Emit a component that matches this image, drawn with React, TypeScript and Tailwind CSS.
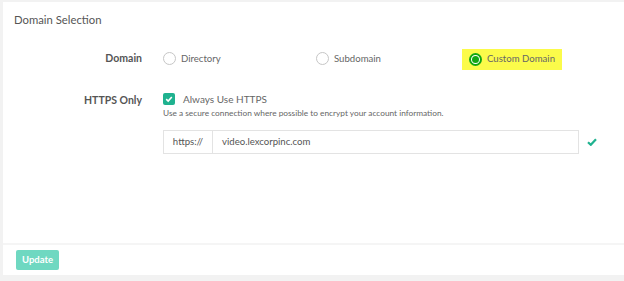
const Radio = ({ checked }: { checked?: boolean }) =>
  checked ? (
    <span className="shrink-0 w-[13px] h-[13px] rounded-full border-2 border-[#13a713] bg-white flex items-center justify-center">
      <span className="w-[7px] h-[7px] rounded-full bg-[#13a713]" />
    </span>
  ) : (
    <span className="shrink-0 w-[13px] h-[13px] rounded-full border border-[#c6c6c6] bg-white" />
  );

const App = () => {
  return (
    <div className="w-[624px] h-[281px] bg-[#f2f2f2] pt-[2px] pl-[3px] pb-[6px] font-['Lato','Open_Sans',sans-serif] text-[#555]">
      <div className="bg-white h-full flex flex-col">
        <div className="h-[37px] pl-[11px] pt-[10px] text-[11.3px] text-[#555]">Domain Selection</div>

        <div className="flex-1 pt-[9px]">
          <div className="flex items-center h-[22px]">
            <div className="w-[139px] text-right text-[10.5px] font-bold text-[#555]">Domain</div>
            <div className="ml-[21px] flex items-center whitespace-nowrap text-[#666] text-[9.6px]">
              <div className="w-[153px] flex items-center gap-[5px]">
                <Radio />
                <span>Directory</span>
              </div>
              <div className="w-[146px] flex items-center gap-[5px]">
                <Radio />
                <span>Subdomain</span>
              </div>
              <div className="w-[100px] h-[21px] bg-[#fbfb4a] pl-[7px] flex items-center gap-[5px]">
                <Radio checked />
                <span>Custom Domain</span>
              </div>
            </div>
          </div>

          <div className="flex mt-[22px]">
            <div className="w-[139px] text-right text-[10.5px] font-bold text-[#555] pt-[1px]">HTTPS Only</div>
            <div className="ml-[21px] w-[440px]">
              <div className="flex items-center gap-[8px] h-[14px]">
                <span className="w-[12px] h-[12px] rounded-[2px] bg-[#1fb28f] flex items-center justify-center">
                  <svg width="8" height="8" viewBox="0 0 10 10">
                    <path d="M1.5 5.2 L4 7.5 L8.5 2.5" stroke="white" strokeWidth="2" fill="none" />
                  </svg>
                </span>
                <span className="text-[10px] text-[#666]">Always Use HTTPS</span>
              </div>
              <div className="text-[8.3px] text-[#666] mt-[1px] leading-[12px]">
                Use a secure connection where possible to encrypt your account information.
              </div>
              <div className="flex items-center mt-[11px]">
                <div className="w-[416px] h-[24px] border border-[#e3e3e3] flex items-center text-[9.6px] text-[#555]">
                  <span className="w-[49px] h-full border-r border-[#e3e3e3] flex items-center justify-center">https://</span>
                  <span className="pl-[9px]">video.lexcorpinc.com</span>
                </div>
                <svg className="ml-[8px]" width="10" height="8" viewBox="0 0 10 8">
                  <path d="M1 4.2 L3.8 6.8 L9 1.2" stroke="#1fb28f" strokeWidth="2.2" fill="none" />
                </svg>
              </div>
            </div>
          </div>
        </div>

        <div className="border-t-2 border-[#f5f5f5] h-[32px] flex items-center pl-[13px]">
          <button className="w-[43px] h-[20px] rounded-[2px] bg-[#6fd8c1] text-white text-[9.5px] font-bold">
            Update
          </button>
        </div>
      </div>
    </div>
  );
};

export default App;
